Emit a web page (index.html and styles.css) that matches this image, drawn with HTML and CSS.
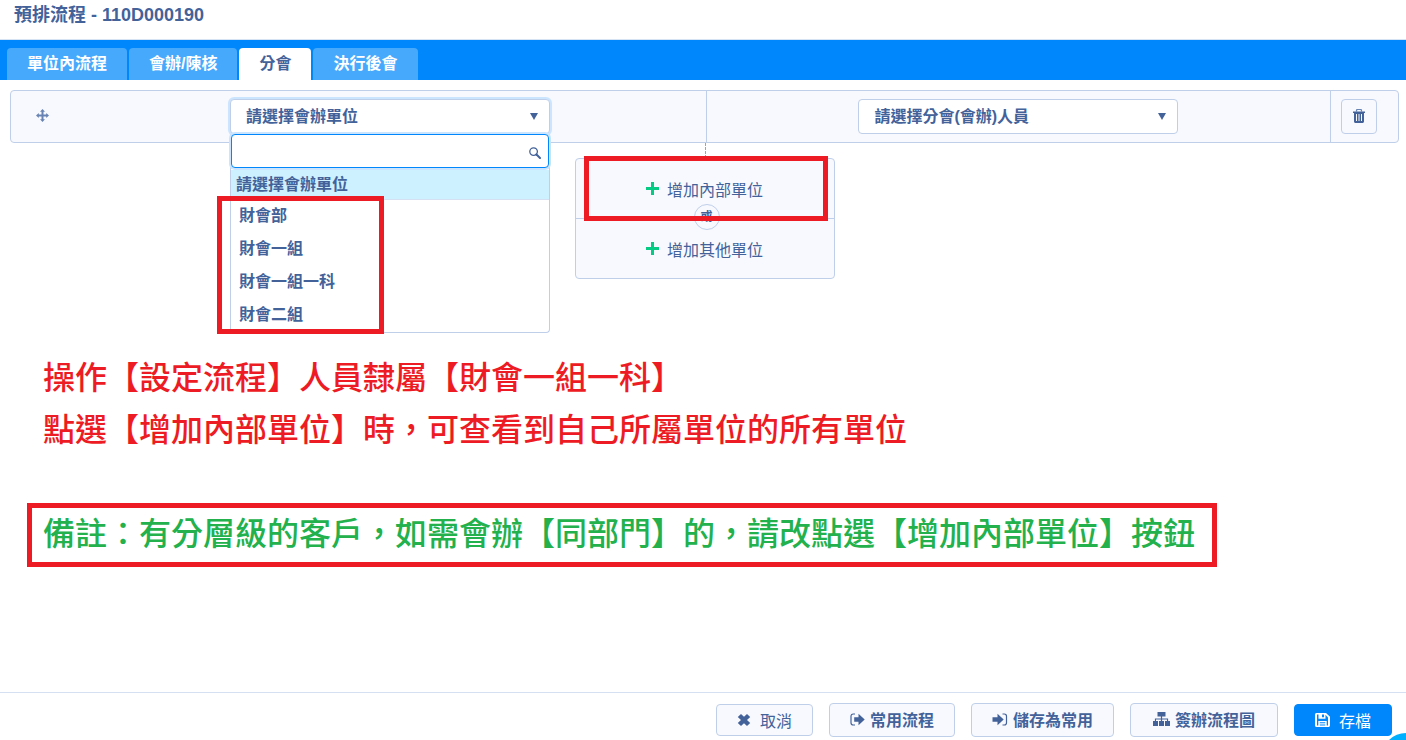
FILE: index.html
```
<!DOCTYPE html>
<html lang="zh-Hant">
<head>
    <meta charset="UTF-8">
    <meta name="viewport" content="width=device-width, initial-scale=1.0">
    <title>預排流程</title>
    <link rel="stylesheet" href="styles.css">
</head>
<body>

<header class="header">
    <h1>預排流程 - 110D000190</h1>
</header>

<nav class="tabs">
    <button type="button" class="tab">單位內流程</button>
    <button type="button" class="tab">會辦/陳核</button>
    <button type="button" class="tab active">分會</button>
    <button type="button" class="tab">決行後會</button>
</nav>

<main class="content">
    <div class="flow-row">
        <div class="cell handle">
            <svg width="13" height="13" viewBox="0 0 13 13"><path d="M6.500 0L9 2.800H7.500v2.700h2.700V4L13 6.500 10.200 9V7.500H7.500v2.700H9L6.500 13 4 10.200h1.500V7.500H2.800V9L0 6.500 2.800 4v1.500h2.700V2.800H4z" fill="currentColor"/></svg>
        </div>
        <div class="cell">
            <div class="dropdown">
                <select class="select open" aria-label="會辦單位">
                    <option>請選擇會辦單位</option>
                </select>
                <svg class="caret" width="8" height="7" viewBox="0 0 8 7"><path d="M0 0h8L4 7z" fill="currentColor"/></svg>
                <div class="menu">
                    <div class="search">
                        <input type="text" aria-label="搜尋">
                        <svg class="search-icon" width="12" height="12" viewBox="0 0 12 12" fill="none" stroke="currentColor"><circle cx="4.600" cy="4.600" r="3.800" stroke-width="1.300"/><path d="M7.500 7.500L11 11" stroke-width="2" stroke-linecap="round"/></svg>
                    </div>
                    <ul>
                        <li class="selected">請選擇會辦單位</li>
                        <li>財會部</li>
                        <li>財會一組</li>
                        <li>財會一組一科</li>
                        <li>財會二組</li>
                    </ul>
                </div>
                <div class="mark mark-list"></div>
            </div>
        </div>
        <div class="cell line">
            <div class="dropdown">
                <select class="select" aria-label="會辦人員">
                    <option>請選擇分會(會辦)人員</option>
                </select>
                <svg class="caret" width="8" height="7" viewBox="0 0 8 7"><path d="M0 0h8L4 7z" fill="currentColor"/></svg>
            </div>
        </div>
        <div class="cell line delete">
            <button type="button" class="btn-icon" aria-label="刪除">
                <svg width="12" height="14" viewBox="0 0 12 14"><path d="M3.500 2.500V1.500C3.500.8 4 .4 4.700.4h2.600c.7 0 1.200.4 1.200 1.100v1" fill="none" stroke="#6884b4" stroke-width="1.200"/><path d="M0 2.500h12V4H0zM1 4h10v8.500c0 .8-.7 1.500-1.500 1.500h-7C1.700 14 1 13.300 1 12.500zm2 1v7h1V5zm2.500 0v7h1V5zM8 5v7h1V5z" fill="currentColor" fill-rule="evenodd"/></svg>
            </button>
        </div>
    </div>

    <div class="connector"></div>

    <div class="add-box">
        <button type="button" class="add">
            <svg width="13" height="13" viewBox="0 0 13 13"><path d="M5 0h3v5h5v3H8v5H5V8H0V5h5z" fill="currentColor"/></svg>
            增加內部單位
        </button>
        <button type="button" class="add">
            <svg width="13" height="13" viewBox="0 0 13 13"><path d="M5 0h3v5h5v3H8v5H5V8H0V5h5z" fill="currentColor"/></svg>
            增加其他單位
        </button>
        <span class="or">或</span>
        <div class="mark mark-add"></div>
    </div>

    <div class="notes">
        <p>操作【設定流程】人員隸屬【財會一組一科】</p>
        <p>點選【增加內部單位】時，可查看到自己所屬單位的所有單位</p>
        <p class="remark">備註：有分層級的客戶，如需會辦【同部門】的，請改點選【增加內部單位】按鈕</p>
    </div>
</main>

<footer class="footer">
    <button type="button" class="btn small">
        <svg width="14" height="12" viewBox="0 0 14 12"><path d="M4 0l3 2.800L10 0l3.200 3-3.200 3 3.200 3L10 12 7 9.200 4 12 .8 9 4 6 .8 3z" fill="currentColor"/></svg>
        取消
    </button>
    <button type="button" class="btn">
        <svg width="15" height="13" viewBox="0 0 15 13"><path d="M5 1H3.200C1.800 1 1 1.800 1 3.200v6.600C1 11.200 1.800 12 3.200 12H5" fill="none" stroke="currentColor" stroke-width="1.200"/><path d="M4.200 4.300H8.500V.8l6.200 5.700-6.200 5.700V8.700H4.200z" fill="currentColor"/></svg>
        常用流程
    </button>
    <button type="button" class="btn">
        <svg width="16" height="13" viewBox="0 0 16 13"><path d="M10.500 1h1.800c1.400 0 2.200.8 2.200 2.200v6.600c0 1.400-.8 2.200-2.200 2.200h-1.800" fill="none" stroke="currentColor" stroke-width="1.200"/><path d="M.5 4.300h5V.8l6.200 5.700-6.200 5.700V8.700h-5z" fill="currentColor"/></svg>
        儲存為常用
    </button>
    <button type="button" class="btn wide">
        <svg width="17" height="14" viewBox="0 0 17 14"><path d="M4.500 0h8v4.500H9.100V6.500h6V9H17v5h-5V9h2V7.600H9.100V9H11v5H6V9h1.900V7.600H3V9h2v5H0V9h1.900V6.500h6v-2H4.500z" fill="currentColor"/></svg>
        簽辦流程圖
    </button>
    <button type="button" class="btn small primary">
        <svg width="15" height="14" viewBox="0 0 15 14"><path d="M1.500 0H11l4 3.700v8.800c0 .8-.7 1.500-1.500 1.500h-12C.7 14 0 13.300 0 12.500v-11C0 .7.7 0 1.500 0zM2 1.500v11h1.300V8h8.400v4.500H13V4.400l-2.500-2.600V5.800h-7V1.500zm5 0v2.800h2V1.500zM4.800 9.300v1h5.400v-1zm0 2.100v1.100h5.400v-1.100z" fill="currentColor" fill-rule="evenodd"/></svg>
        存檔
    </button>
</footer>

<div class="bubble"></div>

</body>
</html>
```

FILE: styles.css
```
* {
    box-sizing: border-box;
}
body {
    margin: 0;
    min-height: 100vh;
    display: flex;
    flex-direction: column;
    background-color: #ffffff;
    color: #43629a;
    font-family: "Liberation Sans", "Noto Sans CJK TC", sans-serif;
    font-size: 16px;
}
button, select, input {
    font-family: inherit;
    font-size: 16px;
    color: inherit;
}
button {
    cursor: pointer;
}
svg {
    flex: none;
}
.header {
    height: 40px;
    padding: 0 14px;
    border-bottom: 1px solid #d5e3f3;
}
h1 {
    margin: 0;
    font-size: 18px;
    line-height: 30px;
}
.tabs {
    display: flex;
    gap: 2px;
    padding: 8px 7px 0;
    background-color: #0087fb;
}
.tab {
    height: 32px;
    padding: 0 20px 4px;
    border: none;
    border-radius: 4px 4px 0 0;
    background-color: #47a9fc;
    color: #ffffff;
    font-weight: bold;
}
.tab.active {
    background-color: #ffffff;
    color: #43629a;
}
.content {
    flex: 1;
    padding: 10px 7px 10px 10px;
}

/* flow row */
.flow-row {
    display: grid;
    grid-template-columns: 63px 1fr 45% 68px;
    min-height: 53px;
    border: 1px solid #bfcfe9;
    border-radius: 4px;
    background-color: #f8f9fe;
}
.cell {
    display: flex;
    justify-content: center;
    align-items: center;
}
.cell.line {
    border-left: 1px solid #bfcfe9;
}
.cell.handle {
    padding: 0 1px 2px 0;
    color: #6884b4;
}
.cell.delete {
    justify-content: flex-start;
    padding-left: 10px;
}
.btn-icon {
    display: flex;
    justify-content: center;
    align-items: center;
    width: 36px;
    height: 35px;
    padding: 0 0 2px;
    border: 1px solid #bfcfe9;
    border-radius: 4px;
    background-color: #f8f9fe;
}

/* dropdown */
.dropdown {
    position: relative;
    width: 320px;
}
.select {
    display: block;
    appearance: none;
    width: 100%;
    height: 35px;
    padding: 0 15px;
    border: 1px solid #bfcfe9;
    border-radius: 4px;
    background-color: #ffffff;
    font-weight: bold;
}
.select.open {
    box-shadow: 0 0 0 2px #cce5fe;
}
.caret {
    position: absolute;
    top: 14px;
    right: 12px;
    pointer-events: none;
}
.menu {
    position: absolute;
    top: 35px;
    left: 0;
    right: 0;
    z-index: 1;
    border: 1px solid #bfcfe9;
    border-top: none;
    border-radius: 0 0 4px 4px;
    background-color: #ffffff;
    font-weight: bold;
}
.search {
    position: relative;
}
.search input {
    display: block;
    width: 100%;
    height: 34px;
    padding: 0 32px 0 8px;
    border: 1px solid #0087fb;
    border-radius: 4px;
    box-shadow: 0 0 0 2px #cce5fe;
    outline: none;
}
.search-icon {
    position: absolute;
    top: 13px;
    right: 8px;
}
.menu ul {
    margin: 2px 0 0;
    padding: 0;
    list-style: none;
}
.menu li {
    padding: 0 8px 2px;
    line-height: 31px;
}
.menu li.selected {
    padding: 0 5px;
    border-bottom: 1px solid #d5e0f2;
    background-color: #cdf1fe;
    line-height: 29px;
}

/* add box */
.connector {
    width: 2px;
    height: 15px;
    margin: 0 auto;
    border-right: 1px dashed #8ea6cf;
}
.add-box {
    position: relative;
    width: 260px;
    margin: 0 auto;
    border: 1px solid #bfcfe9;
    border-radius: 4px;
    background-color: #f8f9fe;
}
.add {
    display: flex;
    justify-content: center;
    align-items: center;
    gap: 8px;
    width: 100%;
    height: 59px;
    padding: 0;
    border: none;
    background: none;
}
.add + .add {
    height: 60px;
    border-top: 1px solid #bfcfe9;
}
.add svg {
    color: #06cb84;
}
.or {
    position: absolute;
    top: 45px;
    left: 118px;
    width: 26px;
    height: 26px;
    border: 1px solid #bfcfe9;
    border-radius: 50%;
    background-color: #f8f9fe;
    font-size: 12px;
    font-weight: bold;
    line-height: 24px;
    text-align: center;
}

/* red frames */
.mark {
    position: absolute;
    z-index: 2;
    border: 5px solid #ed1c24;
    pointer-events: none;
}
.mark-list {
    top: 97px;
    left: -13px;
    width: 167px;
    height: 138px;
}
.mark-add {
    top: -3px;
    left: 8px;
    width: 244px;
    height: 65px;
}

/* notes */
.notes {
    margin: 73px 0 0 17px;
    color: #ed1c24;
    font-size: 32px;
    font-weight: 500;
    line-height: 52px;
}
.notes p {
    margin: 0;
    padding: 0 16px;
}
.notes .remark {
    width: fit-content;
    margin-top: 47px;
    padding: 0 17px 2px 11px;
    border: 5px solid #ed1c24;
    color: #22b14c;
}

/* footer */
.footer {
    display: flex;
    justify-content: flex-end;
    align-items: center;
    gap: 16px;
    height: 48px;
    padding: 7px 14px 0;
    border-top: 1px solid #d5e0f2;
}
.btn {
    display: flex;
    align-items: center;
    gap: 5px;
    height: 34px;
    padding: 0 20px 2px;
    border: 1px solid #bfcfe9;
    border-radius: 4px;
    background-color: #f8f9fe;
    font-weight: bold;
}
.btn.wide {
    padding: 0 22px 2px;
}
.btn.small {
    gap: 9px;
    height: 32px;
    padding-bottom: 0;
    font-weight: normal;
}
.btn.primary {
    border-color: #0087fb;
    background-color: #0087fb;
    color: #ffffff;
}
.bubble {
    position: fixed;
    right: -24px;
    bottom: -41px;
    width: 48px;
    height: 48px;
    border-radius: 50%;
    background-color: #00b0ff;
}
```
